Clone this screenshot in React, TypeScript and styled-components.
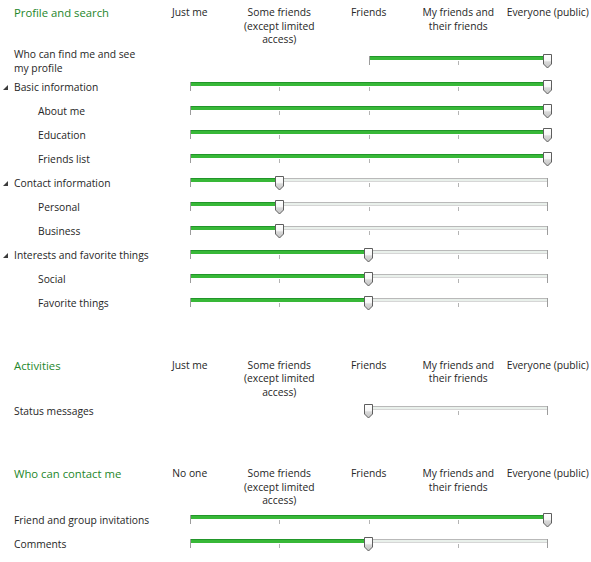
import { Fragment } from 'react'
import styled, { createGlobalStyle } from 'styled-components'

const COL = 89.5
const LABEL_W = 145

const GlobalStyle = createGlobalStyle`
	html, body {
		margin: 0;
		padding: 0;
		background: #ffffff;
		overflow: hidden;
	}
	body {
		font-family: 'Open Sans', 'Noto Sans', sans-serif;
		color: #262626;
	}
`

const Page = styled.div`
	width: 591px;
	padding-top: 6px;
	display: flex;
	flex-direction: column;
	gap: 44px;
`

const Section = styled.div`
	display: grid;
	grid-template-columns: ${LABEL_W}px repeat(5, ${COL}px);
	grid-auto-rows: minmax(24px, auto);
	align-items: center;
`

const Title = styled.div`
	grid-column: 1;
	align-self: start;
	padding-left: 14px;
	font-size: 11.3px;
	line-height: 13.5px;
	color: #24862a;
	white-space: nowrap;
`

const ColumnLabel = styled.div`
	align-self: start;
	text-align: center;
	font-size: 10.3px;
	line-height: 13.5px;
	white-space: pre;
`

const Label = styled.div<{ $level: number; $parent: boolean }>`
	grid-column: 1;
	display: flex;
	align-items: center;
	padding-left: ${props => (props.$parent ? 3 : props.$level === 1 ? 38 : 14)}px;
	font-size: 10.3px;
	line-height: 14px;
	white-space: pre;
`

const Arrow = styled.span`
	flex: none;
	width: 0;
	height: 0;
	margin: 2px 6px 0 0;
	border-left: 5px solid transparent;
	border-bottom: 5px solid #3c3c3c;
`

const SliderBox = styled.div<{ $start: number }>`
	grid-column: ${props => props.$start + 2} / 7;
	margin: 0 ${COL / 2}px;
	position: relative;
	height: 14px;
`

const Track = styled.div`
	position: relative;
	margin-top: 2px;
	height: 2px;
	background: #e9f0eb;
	border-top: 1px solid #b9b9b9;
	border-bottom: 1px solid #d6d6d6;
`

const Fill = styled.div`
	position: absolute;
	left: 0;
	top: -1px;
	bottom: -1px;
	background: #38b838;
	border-top: 1px solid #22962a;
`

const Tick = styled.div<{ $edge: boolean }>`
	position: absolute;
	top: ${props => (props.$edge ? 2 : 7)}px;
	height: ${props => (props.$edge ? 9 : 4)}px;
	width: 1px;
	background: ${props => (props.$edge ? '#9c9c9c' : '#b4b4b4')};
`

const Thumb = styled.svg`
	position: absolute;
	top: 0;
	width: 11px;
	height: 15px;
	margin-left: -5.5px;
`

type SliderProps = { min: number; value: number }

const Slider = ({ min, value }: SliderProps) => {
	const steps = 4 - min
	const frac = (value - min) / steps
	const ticks = Array.from({ length: steps + 1 }, (_, i) => i)

	return (
		<SliderBox $start={min}>
			<Track>
				<Fill style={{ width: `${frac * 100}%` }} />
			</Track>
			{ticks.map(i => (
				<Tick
					key={i}
					$edge={i === 0 || i === steps}
					style={{ left: `calc(${(i / steps) * 100}% - ${i === steps ? 1 : 0}px)` }}
				/>
			))}
			<Thumb style={{ left: `${frac * 100}%` }} viewBox="0 0 11 15">
				<defs>
					<linearGradient id="thumbFill" x1="0" y1="0" x2="0" y2="1">
						<stop offset="0" stopColor="#ffffff" />
						<stop offset="0.45" stopColor="#f6f6f6" />
						<stop offset="0.55" stopColor="#d9d9d9" />
						<stop offset="1" stopColor="#c4c4c4" />
					</linearGradient>
				</defs>
				<path
					d="M1.5 0.5 H9.5 V10 L5.5 14 L1.5 10 Z"
					fill="url(#thumbFill)"
					stroke="#5e5e5e"
					strokeWidth="1"
				/>
			</Thumb>
		</SliderBox>
	)
}

type Row = { label: string; level: number; parent?: boolean; min: number; value: number }

type SectionData = { title: string; columns: string[]; rows: Row[] }

const friendsColumns = [
	'Some friends\n(except limited\naccess)',
	'Friends',
	'My friends and\ntheir friends',
	'Everyone (public)',
]

const sections: SectionData[] = [
	{
		title: 'Profile and search',
		columns: ['Just me', ...friendsColumns],
		rows: [
			{ label: 'Who can find me and see\nmy profile', level: 0, min: 2, value: 4 },
			{ label: 'Basic information', level: 0, parent: true, min: 0, value: 4 },
			{ label: 'About me', level: 1, min: 0, value: 4 },
			{ label: 'Education', level: 1, min: 0, value: 4 },
			{ label: 'Friends list', level: 1, min: 0, value: 4 },
			{ label: 'Contact information', level: 0, parent: true, min: 0, value: 1 },
			{ label: 'Personal', level: 1, min: 0, value: 1 },
			{ label: 'Business', level: 1, min: 0, value: 1 },
			{ label: 'Interests and favorite things', level: 0, parent: true, min: 0, value: 2 },
			{ label: 'Social', level: 1, min: 0, value: 2 },
			{ label: 'Favorite things', level: 1, min: 0, value: 2 },
		],
	},
	{
		title: 'Activities',
		columns: ['Just me', ...friendsColumns],
		rows: [{ label: 'Status messages', level: 0, min: 2, value: 2 }],
	},
	{
		title: 'Who can contact me',
		columns: ['No one', ...friendsColumns],
		rows: [
			{ label: 'Friend and group invitations', level: 0, min: 0, value: 4 },
			{ label: 'Comments', level: 0, min: 0, value: 2 },
		],
	},
]

export default function App() {
	return (
		<>
			<GlobalStyle />
			<Page>
				{sections.map(section => (
					<Section key={section.title}>
						<Title>{section.title}</Title>
						{section.columns.map(col => (
							<ColumnLabel key={col}>{col}</ColumnLabel>
						))}
						{section.rows.map(row => (
							<Fragment key={row.label}>
								<Label $level={row.level} $parent={!!row.parent}>
									{row.parent && <Arrow />}
									{row.label}
								</Label>
								<Slider min={row.min} value={row.value} />
							</Fragment>
						))}
					</Section>
				))}
			</Page>
		</>
	)
}
